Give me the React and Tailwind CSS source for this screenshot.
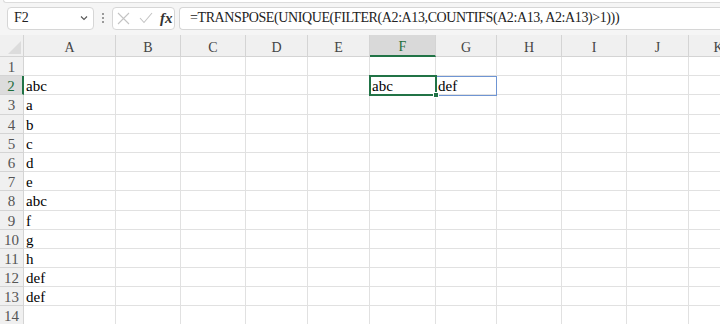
import React from 'react';

const COLS = [
  { id: 'A', w: 92 },
  { id: 'B', w: 65 },
  { id: 'C', w: 65 },
  { id: 'D', w: 62 },
  { id: 'E', w: 62 },
  { id: 'F', w: 66 },
  { id: 'G', w: 61 },
  { id: 'H', w: 65 },
  { id: 'I', w: 65 },
  { id: 'J', w: 62 },
  { id: 'K', w: 60 },
];

const COL_A = ['', 'abc', 'a', 'b', 'c', 'd', 'e', 'abc', 'f', 'g', 'h', 'def', 'def', ''];

const serif = "font-['Liberation_Serif','DejaVu_Serif',serif]";

const NameBox = () => (
  <div className="flex items-center justify-between w-[87px] h-[23px] ml-[7px] bg-white border border-[#d6d6d6] rounded-[4px] pl-[6px] pr-[4px]">
    <span className={`${serif} text-[14px] text-[#222] leading-none`}>F2</span>
    <svg width="10" height="10" viewBox="0 0 10 10" fill="none" stroke="#555" strokeWidth="1.1">
      <path d="M2 3.5 L5 6.5 L8 3.5" />
    </svg>
  </div>
);

const FormulaButtons = () => (
  <div className="flex items-center gap-[9px] w-[63px] h-[23px] bg-white border border-[#d6d6d6] rounded-[4px] pl-[4px]">
    <svg width="13" height="13" viewBox="0 0 13 13" stroke="#c4c4c4" strokeWidth="1.1">
      <path d="M1 1 L12 12 M12 1 L1 12" />
    </svg>
    <svg width="14" height="12" viewBox="0 0 14 12" fill="none" stroke="#c4c4c4" strokeWidth="1.1">
      <path d="M1 6 L5 10.5 L13 1" />
    </svg>
    <span className={`${serif} -ml-[2px] text-[15px] italic font-bold text-[#333] leading-none`}>fx</span>
  </div>
);

const HeaderRow = () => (
  <div className="flex h-[22px] bg-[#f0f0f0]">
    <div className="w-[24px] shrink-0 relative border-r border-b border-[#d4d4d4]">
      <svg className="absolute right-[2px] bottom-[2px]" width="13" height="13" viewBox="0 0 13 13">
        <path d="M13 0 L13 13 L0 13 Z" fill="#dcdcdc" />
      </svg>
    </div>
    {COLS.map((c) => {
      const sel = c.id === 'F';
      return (
        <div
          key={c.id}
          style={{ width: c.w }}
          className={
            sel
              ? `${serif} shrink-0 flex items-end justify-center text-[14px] leading-[16px] text-[#1e6e3c] bg-[#d9d9d9] border-r border-[#d4d4d4] border-b-2 border-b-[#217346]`
              : `${serif} shrink-0 flex items-end justify-center text-[14px] leading-[16px] text-[#444] border-r border-b border-[#d4d4d4]`
          }
        >
          {c.id}
        </div>
      );
    })}
  </div>
);

const Row = ({ n }) => {
  const selRow = n === 2;
  return (
    <div className="flex h-[19.2px]">
      <div
        className={
          selRow
            ? `${serif} w-[24px] shrink-0 text-center pt-[2px] text-[15px] leading-[17px] text-[#1e6e3c] bg-[#dcdcdc] border-b border-[#d4d4d4] border-r-2 border-r-[#217346]`
            : `${serif} w-[24px] shrink-0 text-center pt-[2px] text-[15px] leading-[17px] text-[#555] bg-[#f0f0f0] border-r border-b border-[#d4d4d4]`
        }
      >
        {n}
      </div>
      {COLS.map((c) => {
        let text = '';
        if (c.id === 'A') text = COL_A[n - 1];
        if (n === 2 && c.id === 'F') text = 'abc';
        if (n === 2 && c.id === 'G') text = 'def';
        return (
          <div
            key={c.id}
            style={{ width: c.w }}
            className={`${serif} shrink-0 bg-white border-r border-b border-[#e1e1e1] pl-[2px] pt-[2px] text-[15px] leading-[17px] text-black whitespace-nowrap overflow-hidden`}
          >
            {text}
          </div>
        );
      })}
    </div>
  );
};

export default function App() {
  return (
    <div className="w-[720px] h-[324px] overflow-hidden bg-[#f5f5f5] relative">
      <div className="h-[3px] ml-[3px] bg-white border-b border-l border-[#dcdcdc] rounded-bl-[4px]" />
      <div className="flex items-center h-[32px] pb-[2px]">
        <NameBox />
        <div className="flex flex-col gap-[2px] mx-[8px]">
          <span className="w-[2px] h-[2px] bg-[#9a9a9a]" />
          <span className="w-[2px] h-[2px] bg-[#9a9a9a]" />
          <span className="w-[2px] h-[2px] bg-[#9a9a9a]" />
        </div>
        <FormulaButtons />
        <div className="flex-1 flex items-center h-[23px] ml-[4px] bg-white border border-r-0 border-[#d6d6d6] rounded-l-[4px] pl-[10px]">
          <span className={`${serif} text-[14px] leading-none text-[#222] whitespace-nowrap tracking-[-0.4px]`}>
            =TRANSPOSE(UNIQUE(FILTER(A2:A13,COUNTIFS(A2:A13, A2:A13)&gt;1)))
          </span>
        </div>
      </div>
      <div className="relative">
        <HeaderRow />
        {Array.from({ length: 14 }, (_, i) => (
          <Row key={i} n={i + 1} />
        ))}
        {/* spill range outline */}
        <div className="absolute left-[370px] top-[40.5px] w-[127px] h-[20px] border border-[#6f95d3] pointer-events-none" />
        {/* active cell */}
        <div className="absolute left-[369px] top-[40px] w-[68px] h-[21px] border-2 border-[#217346] pointer-events-none" />
        <div className="absolute left-[433px] top-[57px] w-[6px] h-[6px] bg-[#217346] border border-white" />
      </div>
    </div>
  );
}
